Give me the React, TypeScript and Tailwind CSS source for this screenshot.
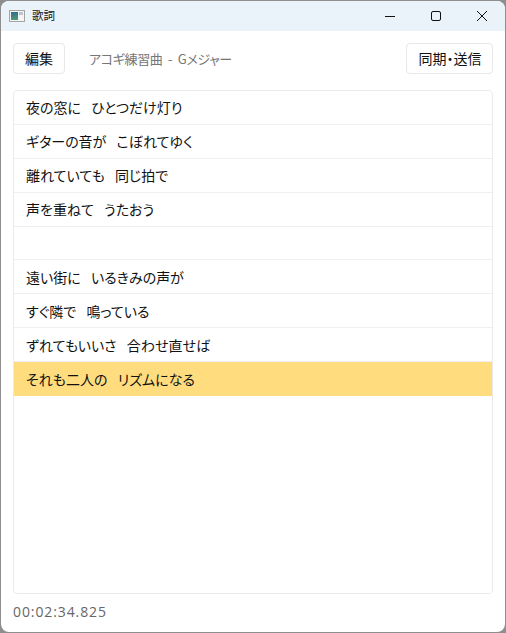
const lines = [
  '夜の窓に  ひとつだけ灯り',
  'ギターの音が  こぼれてゆく',
  '離れていても  同じ拍で',
  '声を重ねて  うたおう',
  '',
  '遠い街に  いるきみの声が',
  'すぐ隣で  鳴っている',
  'ずれてもいいさ  合わせ直せば',
  'それも二人の  リズムになる',
];

const cjk = 'font-["Noto_Sans_CJK_JP",sans-serif] [font-feature-settings:"palt"]';

function LyricRow({ text, active }: { text: string; active: boolean }) {
  return (
    <div
      className={
        'h-[33.9px] shrink-0 flex items-center pl-3 pt-[1px] whitespace-pre text-[14px] [word-spacing:2px] text-[#111] border-b ' +
        (active ? 'bg-[#ffdd7f] border-[#ffdd7f]' : 'border-[#efefef]')
      }
    >
      {text}
    </div>
  );
}

export default function App() {
  return (
    <div className="w-[506px] h-[633px] bg-[#8f8d8d] overflow-hidden">
      {/* window */}
      <div className={`ml-[1px] mt-[1px] w-[504px] h-[631px] rounded-lg overflow-hidden bg-white flex flex-col ${cjk}`}>
        {/* title bar */}
        <div className="h-[30px] shrink-0 bg-[#e9f3f9] flex items-center">
          <svg width="16" height="16" viewBox="0 0 16 16" className="ml-[8px]">
            <defs>
              <linearGradient id="appIcon" x1="0" y1="0" x2="0" y2="1">
                <stop offset="0" stopColor="#2f6f8f" />
                <stop offset="1" stopColor="#4f9a78" />
              </linearGradient>
            </defs>
            <rect x="0.5" y="2.5" width="15" height="11" fill="#f4f4f4" stroke="#a5a5a5" />
            <rect x="2" y="4" width="7" height="8" fill="url(#appIcon)" />
            <rect x="10" y="4" width="4" height="3" fill="#b9c4cc" />
          </svg>
          <span className="ml-[7px] text-[11.5px] text-[#111]">歌詞</span>
          <div className="ml-auto flex items-center">
            <svg width="12" height="12" viewBox="0 0 12 12" className="mr-[34px]">
              <path d="M1 6.5h10" stroke="#111" strokeWidth="1" />
            </svg>
            <svg width="12" height="12" viewBox="0 0 12 12" className="mr-[34px]">
              <rect x="1.5" y="1.5" width="9" height="9" rx="1.5" fill="none" stroke="#111" strokeWidth="1" />
            </svg>
            <svg width="12" height="12" viewBox="0 0 12 12" className="mr-[17px]">
              <path d="M1 1l10 10M11 1L1 11" stroke="#111" strokeWidth="1" />
            </svg>
          </div>
        </div>
        {/* content */}
        <div className="flex-1 min-h-0 flex flex-col px-3 pt-[12px]">
          <div className="flex items-center h-[31px] shrink-0">
            <button className="h-[31px] w-[52px] rounded border border-[#e8e8e8] bg-white text-[14px] text-[#111]">編集</button>
            <span className="ml-[24px] text-[13px] tracking-[-0.35px] [word-spacing:3px] text-[#767676]">アコギ練習曲 - Gメジャー</span>
            <button className="ml-auto h-[31px] w-[87px] pl-[1px] rounded border border-[#e8e8e8] bg-white text-[14px] text-[#111]">同期・送信</button>
          </div>
          <div className="mt-[16px] h-[504px] shrink-0 rounded border border-[#ebebeb] bg-white overflow-hidden flex flex-col">
            {lines.map((l, i) => (
              <LyricRow key={i} text={l} active={i === lines.length - 1} />
            ))}
          </div>
          <div className="mt-[9px] text-[14px] leading-[18px] text-[#666] tracking-[0.9px] font-['Open_Sans',sans-serif]">00:02:34.825</div>
        </div>
      </div>
    </div>
  );
}
